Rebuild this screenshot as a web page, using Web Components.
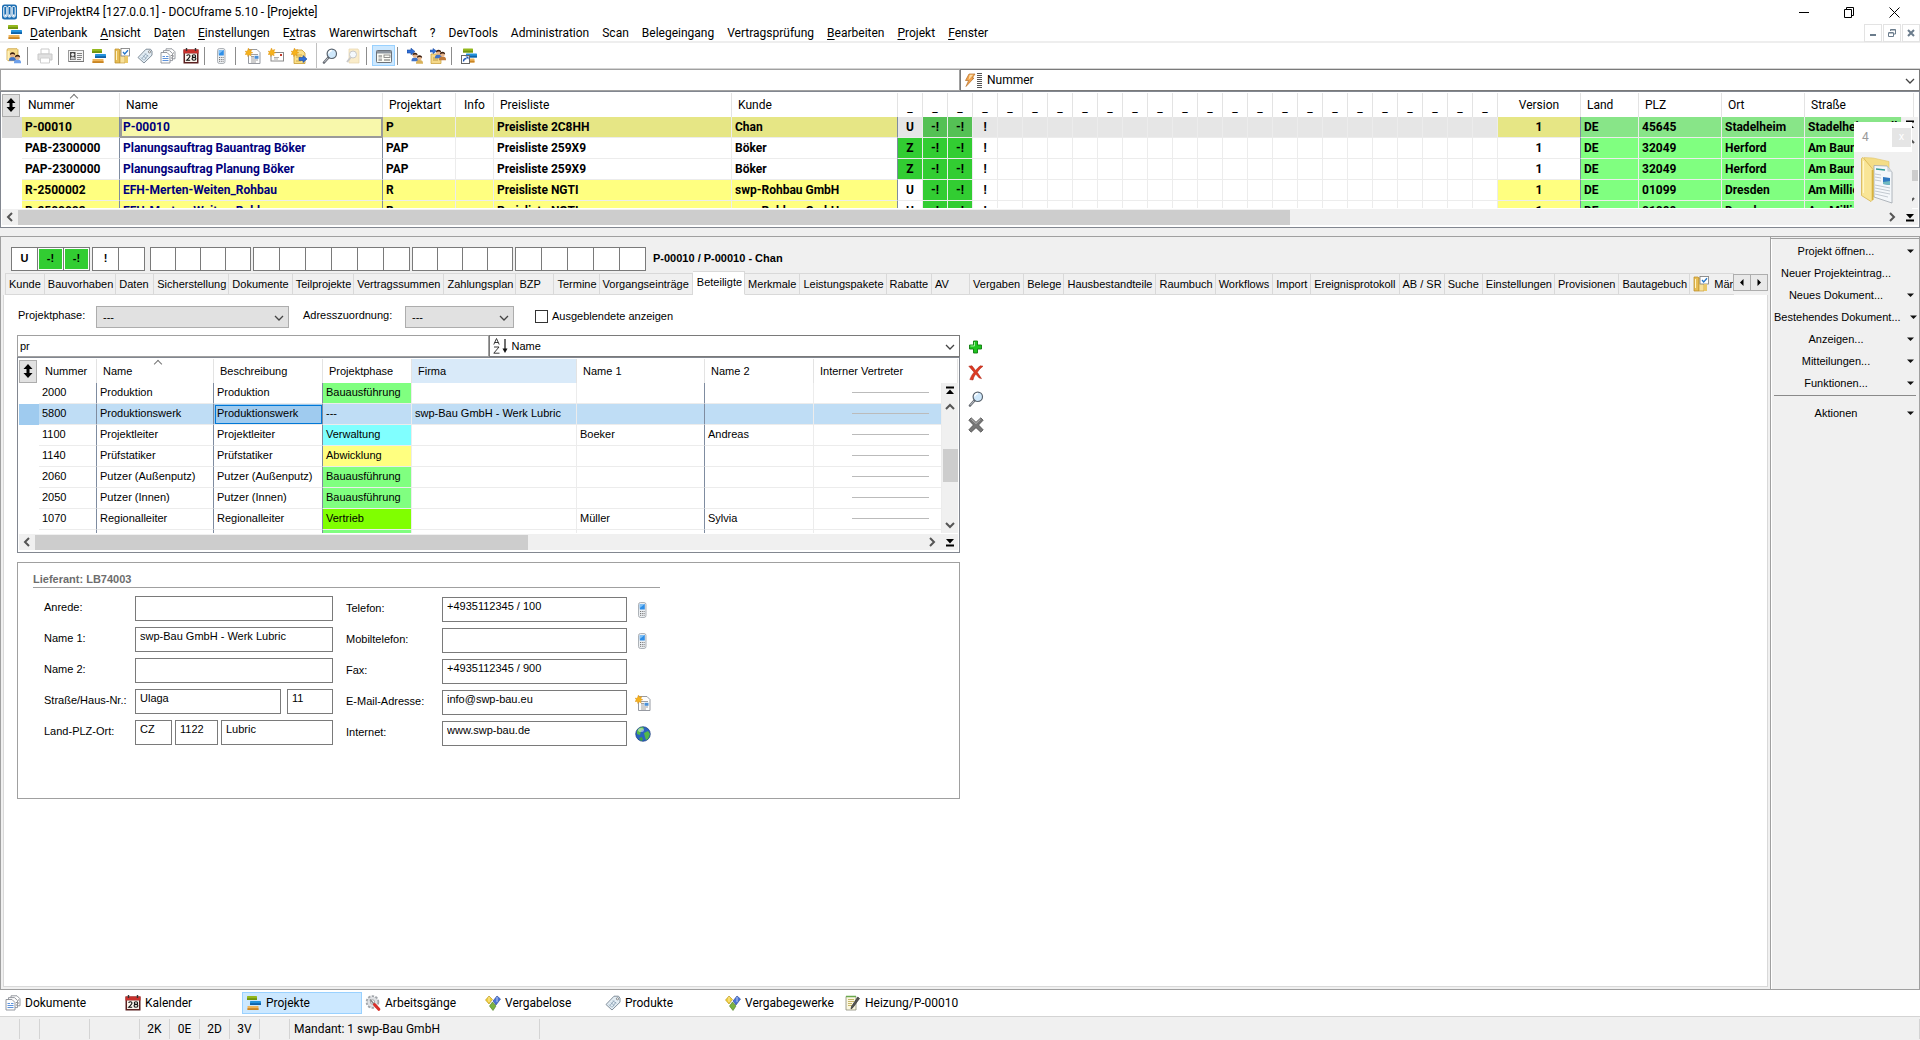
<!DOCTYPE html>
<html lang="de">
<head>
<meta charset="utf-8">
<title>DFViProjektR4 - DOCUframe</title>
<style>
html,body{margin:0;height:100%}
body{overflow:hidden;--ui:Roboto,"Open Sans","Noto Sans",sans-serif;--ms:"Liberation Sans",Arial,sans-serif;font:12px/16px var(--ui);color:#000;background:#fff}
df-app{height:100%}
</style>
</head>
<body>
<df-app></df-app>
<script>
const BASE='<style>*{box-sizing:border-box}:host{display:block;box-sizing:border-box}button{font:inherit;color:inherit;border:0;background:none;padding:0;margin:0}input,select{font:inherit;color:inherit;margin:0;outline:0;border-radius:0}a{color:inherit;text-decoration:none}u{text-underline-offset:2px}</style>';
class Base extends HTMLElement{
  connectedCallback(){ if(this.shadowRoot) return; this.attachShadow({mode:'open'}).innerHTML=BASE+this.view(); }
}
const def=(n,c)=>customElements.define(n,c);

const sheet=(x,y,w,h)=>`<path d="M${x} ${y}h${w-3}l3 3v${h-3}h-${w}z" fill="#fdfdfd" stroke="#8b8f96" stroke-width=".9"/>`;
const star='<path d="M3.5 0l.9 2.3 2.4-.8-1 2.200 2 1-2.200.8.6 2.300-2.300-1-1 1.800-.6-2.200L0 6.500l1.300-1.700L0 3.200l2.200.1z" fill="#f6b21c" stroke="#d98a0a" stroke-width=".4"/>';
const bars='<rect x="1" y="1" width="10" height="4" rx=".6" fill="#94b81e"/><rect x="1" y="3.200" width="10" height="1.800" fill="#6f9410"/><rect x="4" y="6" width="11" height="4" rx=".6" fill="#2492dd"/><rect x="4" y="8.200" width="11" height="1.800" fill="#0f62a8"/><rect x="1.500" y="11" width="11" height="4" rx=".6" fill="#efb45a"/><rect x="1.500" y="13.200" width="11" height="1.800" fill="#c98524"/>';
const man=(x,y,c)=>`<g transform="translate(${x} ${y})"><path d="M0 8q0-3 3.500-3t3.500 3v.8h-7z" fill="${c}"/><circle cx="3.500" cy="3" r="2.300" fill="#e8b48a"/><path d="M1 3Q.8.3 3.500.3T6.100 3Q5 1.900 3.500 2T1 3z" fill="#3a1e10"/></g>`;
const rightArrow=(x,y)=>`<path d="M${x} ${y+1.500}h4v-2l4 3.500-4 3.500v-2h-4z" fill="#2f6fd8" stroke="#1a489c" stroke-width=".6"/>`;
const ICONS={
app:'<rect x="0" y=".5" width="15" height="15" rx="2.500" fill="#1d6fb4"/><rect x="1.800" y="2.500" width="3" height="10.500" rx="1" fill="none" stroke="#fff"/><rect x="6" y="2.500" width="3" height="10.500" rx="1" fill="none" stroke="#fff"/><rect x="10.200" y="2.500" width="3" height="10.500" rx="1" fill="none" stroke="#fff"/><path d="M2.500 10.500h1.600v2H2.500zM6.700 10.500h1.600v2H6.700zM11 10.500h1.600v2H11z" fill="#fff"/>',
gantt:bars,
personfolder:'<path d="M1 1.500l1-.8h9l1 1v11H2l-1-1z" fill="#f5d98a" stroke="#c79b32" stroke-width=".7"/><path d="M1.500 3h2v9h-2z" fill="#fff0b8"/>'+man(3,4,'#3f72c8')+man(8,6.500,'#6ea0ea'),
printer:'<g opacity=".45"><path d="M4 1h8v5H4z" fill="#fff" stroke="#8a8a8a"/><path d="M1 6h14v6H1z" fill="#bbb" stroke="#888"/><path d="M3.500 10h9v5h-9z" fill="#fff" stroke="#999"/></g>',
card:'<rect x=".5" y="2.500" width="15" height="11" fill="#f4f4f4" stroke="#9a9a9a"/><path d="M1 13.500h15v-11" fill="none" stroke="#777"/><rect x="2" y="4" width="5.500" height="8" fill="#454545"/><circle cx="4.700" cy="6.500" r="1.600" fill="#eee"/><path d="M2.500 11.500q0-3 2.200-3t2.300 3z" fill="#ccc"/><path d="M9 5.500h5M9 7.500h5M9 9.500h5M9 11.500h4" stroke="#777" stroke-width=".9"/>',
cabinet:'<path d="M1 1h4l1 1v13H1z" fill="#e7bd55" stroke="#b98b22" stroke-width=".7"/><path d="M6 2h5v13H6z" fill="#f7e09a" stroke="#c69b36" stroke-width=".7"/><path d="M2.500 3v9" stroke="#fff3c4"/><rect x="7" y=".5" width="8.500" height="7.500" fill="#fff" stroke="#777" stroke-width=".8"/><path d="M9 4l1.700 2L14 2.300" fill="none" stroke="#2375c9" stroke-width="1.300"/><path d="M11 8h3v7h-3z" fill="#eac868"/>',
tag:'<path d="M9 1.200h4.500l1.500 2v4L7 15l-6-5.500z" fill="#e3edf4" stroke="#74828e" stroke-width=".9"/><circle cx="12.500" cy="3.800" r="1.100" fill="#fff" stroke="#666" stroke-width=".7"/><path d="M4 9.500l3 3M6 7.500l3 3M8 5.500l3 3M5 10.500l4-5M7.500 12l3.500-5" stroke="#7890a6" stroke-width=".7"/>',
docs:sheet(6,.8,9,10)+sheet(3.500,2.600,9,10)+sheet(1,4.500,9,10.500)+'<path d="M2.500 8.500h2.500M6 8.500h2.500M2.500 10.500h6M2.500 12.500h6" stroke="#4a86d8" stroke-width=".9"/><path d="M11 7.500h1M13 5h1M11 10h1M13 8h1" stroke="#888"/>',
cal:'<rect x=".5" y="1.500" width="15" height="14" fill="#5b2020"/><rect x=".5" y="1.500" width="15" height="4" fill="#c9302c"/><rect x="2" y="5.500" width="12" height="8.500" fill="#fbf6ef"/><path d="M3.500 0v3M12.500 0v3" stroke="#333" stroke-width="1.400"/><path d="M3.800 8q0-1.200 1.600-1.200T7 8q0 1-3.200 4.200H7.200M11 6.800q1.600 0 1.600 1.300T11 9.400q-1.700 0-1.700-1.300T11 6.800zM11 9.400q1.900 0 1.900 1.400T11 12.200q-2 0-2-1.400T11 9.400z" fill="none" stroke="#111" stroke-width="1.100"/>',
phone:'<rect x="3.500" y=".5" width="7.500" height="15" rx="2" fill="#eceff2" stroke="#9aa0a6" stroke-width=".8"/><rect x="4.800" y="2" width="5" height="5.500" fill="#2f8ee6"/><path d="M4.800 2h5L4.800 6z" fill="#7fc0f6"/><path d="M5 9.500h4.600M5 11.500h4.600M5 13.300h4.600" stroke="#777" stroke-dasharray="1 .8"/>',
newdoc:sheet(3.500,1.500,11.500,14)+'<path d="M6 6.500h7M6 12h7M6 14h5" stroke="#888" stroke-width=".8"/><path d="M6 8.500h3M6 10h3" stroke="#888" stroke-width=".8"/><rect x="9.500" y="7.800" width="4" height="3" fill="#4a90d8"/>'+star,
newmail:'<rect x="3" y="4.500" width="12.500" height="8.500" fill="#fff" stroke="#8a8a8a"/><path d="M6 9.500h5M6 11h4" stroke="#999" stroke-width=".8"/><rect x="12" y="6" width="2" height="2" fill="#c0392b"/>'+star,
newarrow:'<path d="M3 2h8l3 3v10.500H3z" fill="#fae08a" stroke="#c79b32" stroke-width=".8"/><path d="M5 7h6M5 9h5M5 13h5" stroke="#c7a040" stroke-width=".8"/>'+star+rightArrow(8,8),
lens:'<path d="M6.500 9.500L2 14.500" stroke="#6a6f76" stroke-width="2.600" stroke-linecap="round"/><path d="M6 10L2.400 14" stroke="#c8ccd2" stroke-width=".9"/><circle cx="9.800" cy="5.800" r="4.700" fill="#cfe8fb" stroke="#59636e" stroke-width="1.200"/><path d="M6.700 5.500q.4-2.800 3.200-3" fill="none" stroke="#fff" stroke-width="1.400"/>',
searchfolder:'<g opacity=".4"><path d="M4 1h9l1 2v12H4z" fill="#f3d27a" stroke="#c79b32" stroke-width=".7"/><path d="M6 9L2 14" stroke="#777" stroke-width="2"/><circle cx="8" cy="6.500" r="3.500" fill="#e6f2fb" stroke="#777"/></g>',
form:'<rect x=".5" y="2.500" width="15" height="12" rx=".8" fill="#fbfbf4" stroke="#6b7178"/><rect x="1" y="3" width="14" height="2.500" fill="#8d959e"/><path d="M2.500 8h3.500M2.500 12h3.500M8 12h6" stroke="#666"/><rect x="8" y="7" width="6" height="2.500" fill="none" stroke="#777" stroke-width=".8"/><path d="M2.500 10h3.500" stroke="#aaa"/>',
assign1:'<path d="M0 2h4V.2L8 3.500 4 6.700V5H0z" fill="#2f6fd8" stroke="#1a489c" stroke-width=".6"/>'+man(4.500,4.500,'#3f72c8')+man(9,7,'#d9b25a'),
assign2:'<path d="M1 6h9l1 1v8.500H1z" fill="#f5d98a" stroke="#c79b32" stroke-width=".7"/><path d="M3 10h5M3 12h5" stroke="#b08a30" stroke-width=".8"/><path d="M0 2h3V.4L6.500 3 3 5.700V4H0z" fill="#2f6fd8" stroke="#1a489c" stroke-width=".5"/>'+man(5,1.500,'#3f72c8')+man(9,3.500,'#c07a3a'),
ganttlink:'<g transform="translate(1 -.5)">'+bars+'</g><rect x=".5" y="7.500" width="8" height="8" fill="#fff" stroke="#666"/><path d="M2.500 13.500q0-3 3-3" stroke="#1c57b5" stroke-width="1.300" fill="none"/><path d="M4.500 8.500h3v3z" fill="#1c57b5"/>',
bolt:'<path d="M5 2h6L8.200 6H10L2 14.500l2.600-6H1.500z" fill="#f0a04a" stroke="#b3702c" stroke-width=".7"/><path d="M5.700 2.800h3.500L4.500 8z" fill="#ffe0a8"/>',
lines:'<path d="M0 1.500h5M0 3.500h5M0 5.500h5M0 7.500h5M0 9.500h5M0 11.500h5M0 13.500h5M0 15.500h5" stroke="#555"/>',
az:'<path d="M.8 6.500L3.500.5 6.200 6.500M1.700 4.500h3.600M1 9h5L.8 15.200h5.700" fill="none" stroke="#222" stroke-width=".9"/><path d="M12 1v11" stroke="#111" stroke-width="1.200"/><path d="M9.500 10.500h5L12 15z" fill="#111"/>',
plus:'<path d="M5.500 2h4v4h4v4h-4v4h-4v-4h-4V6h4z" fill="#1fc51f" stroke="#0d7a0d" stroke-width=".9"/><path d="M6.500 3v4h-4" stroke="#9df09d" fill="none"/>',
redx:'<path d="M.8 1.200L4 .8l3.600 4.700Q10 2.200 12.300.8l2.700.4Q11.500 3.800 9.300 7.300l4.200 6.300-2.300-.6-3.500-4q-2.300 3.200-2.700 6l-3.200-.5Q3.500 10 6 7.200z" fill="#dd3a22" stroke="#a51f10" stroke-width=".5"/>',
greyx:'<path d="M3.200.8L8 5.300 12.800.8l2.400 2.400L10.600 8l4.600 4.800-2.400 2.400L8 10.700l-4.800 4.500L.8 12.800 5.400 8 .8 3.200z" fill="#777" stroke="#444" stroke-width=".7"/><path d="M3.200 2L8 6.500 12.500 2.200" stroke="#bbb" fill="none"/>',
globe:'<circle cx="8" cy="8" r="7.300" fill="#2a63c0" stroke="#1b3d7d" stroke-width=".7"/><path d="M2 5q2-4 6-4l1 2-3 2-1 4-3-1zM9 7l4-2 2 3-2 5-2 1-1-3z" fill="#54b948"/><path d="M4 12l3-1 1 3-2 1z" fill="#3fa23a"/><ellipse cx="6" cy="4" rx="3" ry="2" fill="#fff" opacity=".45"/>',
gears:'<circle cx="7.500" cy="7" r="5.500" fill="#c9ccd0" stroke="#a2a6ab" stroke-width="2.600" stroke-dasharray="2.300 1.200"/><circle cx="7.500" cy="7" r="5" fill="#dfe1e4"/><circle cx="7.500" cy="7" r="2.200" fill="#fff" stroke="#888" stroke-width=".7"/><path d="M5 4.500l4 4.500" stroke="#888" stroke-width="1.600"/><path d="M9.500 9.500l4.300 4.800" stroke="#d8302a" stroke-width="3" stroke-linecap="round"/>',
diamonds:'<path d="M4 1l3.500 3.500L4 9 .5 5z" fill="#f2cf3a" stroke="#b08f16" stroke-width=".6"/><path d="M12 1l3.500 3L11 10 8 6z" fill="#4a74d8" stroke="#23418f" stroke-width=".6"/><path d="M7.500 7L11 11l-3 4.500L4.500 11z" fill="#7cb342" stroke="#4a7a1c" stroke-width=".6"/><path d="M4 2v5M12 2v5" stroke="#fff" opacity=".6"/>',
note:'<path d="M1 1.500h10v13.500H1z" fill="#fbf7df" stroke="#8a8a7a" stroke-width=".8"/><path d="M3 4.500h6M3 6.500h6M3 8.500h4M3 10.500h4" stroke="#bfae5a" stroke-width=".9"/><path d="M14.500 3.500L8 12.500l-2 1.500.5-2.500L12.800 2z" fill="#555" stroke="#222" stroke-width=".6"/><path d="M1 1.500h10" stroke="#6aa84f" stroke-width="1.500"/>',
updown:'<path d="M8 1l4.500 5H9.500v4h3L8 15l-4.500-5h3V6h-3z" fill="#000"/>',
chev:'<path d="M4 6l4 4 4-4" fill="none" stroke="#444" stroke-width="1.300"/>',
left:'<path d="M10 4L6 8l4 4" fill="none" stroke="#555" stroke-width="2"/>',
right:'<path d="M6 4l4 4-4 4" fill="none" stroke="#555" stroke-width="2"/>',
up:'<path d="M4 10l4-4 4 4" fill="none" stroke="#555" stroke-width="2"/>',
down:'<path d="M4 6l4 4 4-4" fill="none" stroke="#555" stroke-width="2"/>',
totop:'<path d="M4 4.500h8" stroke="#000" stroke-width="2"/><path d="M8 6.500l4 4.500H4z" fill="#000"/>',
tobottom:'<path d="M4 11.500h8" stroke="#000" stroke-width="2"/><path d="M8 9.500l4-4.500H4z" fill="#000"/>',
caret:'<path d="M5 6.500h7L8.500 10z" fill="#111"/>',
folderbig:'<path d="M3 .5l9 .5 16 3.500v30l-16 5z" fill="#f4dd86" stroke="#e0c468" stroke-width=".6"/><path d="M13 8.500l13 .5 5 6v31l-18-6z" fill="#f4f7fa" stroke="#9fa6ad" stroke-width=".8"/><path d="M26 9l.5 5.500 4.500.5z" fill="#cfd6dc"/><path d="M15 12l9 1" stroke="#2f9a94" stroke-width="1.400"/><path d="M14 17l6 1M14 20l6 1M14 23l6 1M14 28l15 3M14 31l15 3M14 34l15 3M14 37l13 3" stroke="#bdc4cc" stroke-width=".9"/><path d="M22 20l7 1v7l-7-1z" fill="#2f78c0"/><path d="M22 25l7-1v4l-7-1z" fill="#6fb9c0"/><path d="M.5 1.500L2 .5l10 12v30l-2 2-9.500-6z" fill="#f9e596" stroke="#d9b95a" stroke-width=".9"/><path d="M11.500 13v30" stroke="#d8b23f" stroke-width="1.600"/><path d="M2.500 4v32" stroke="#fff6c8" stroke-width="1.200"/>'
};
def('df-icon',class extends Base{
  view(){const n=this.getAttribute('name'),w=+this.getAttribute('w')||16,h=+this.getAttribute('h')||16;
    return `<style>:host{display:inline-block;flex:none;width:${w}px;height:${h}px;line-height:0}</style><svg width="${w}" height="${h}" viewBox="0 0 ${w} ${h}" aria-hidden="true">${ICONS[n]}</svg>`;}
});
const ic=(n,a='')=>`<df-icon name="${n}" ${a}></df-icon>`;

def('df-titlebar',class extends Base{view(){return `<style>:host{display:flex;height:24px;align-items:center;padding:0 3px 0 2px}
 span{flex:1;padding-left:5px}button{width:45px;height:20px;display:flex;align-items:center;justify-content:center}svg{fill:none;stroke:#000}</style>
 ${ic('app')}<span>DFViProjektR4 [127.0.0.1] - DOCUframe 5.10 - [Projekte]</span>
 <button aria-label="Minimieren"><svg width="11" height="11"><path d="M0 5.500h10"/></svg></button>
 <button aria-label="Wiederherstellen"><svg width="11" height="11"><path d="M.5 2.500h7v8h-7zM2.500 2.500v-2h7v8h-2"/></svg></button>
 <button aria-label="Schließen"><svg width="11" height="11"><path d="M.5.5l10 10M10.500.5l-10 10"/></svg></button>`}});

def('df-menubar',class extends Base{view(){
 const m=['<u>D</u>atenbank','<u>A</u>nsicht','Da<u>t</u>en','<u>E</u>instellungen','E<u>x</u>tras','Warenwirtschaft','?','DevTools','Administration','Scan','Belegeingang','Vertragsprüfung','<u>B</u>earbeiten','<u>P</u>rojekt','<u>F</u>enster'];
 return `<style>:host{display:flex;height:19px;align-items:flex-start;border-bottom:2px solid #eee;padding-left:7px}
 nav{display:flex;flex:1;gap:13px;padding-left:7px}nav button{height:17px;line-height:19px}
 .w{display:flex;gap:1px}.w button{width:18px;height:18px;border:1px solid #e3e3e3;display:flex;align-items:center;justify-content:center;background:#fff}svg{fill:none;stroke:#6b7c8c;stroke-width:2}</style>
 ${ic('gantt')}<nav>${m.map(t=>`<button>${t}</button>`).join('')}</nav>
 <div class="w"><button aria-label="Fenster minimieren"><svg width="8" height="8"><path d="M1 6h6"/></svg></button>
 <button aria-label="Fenster wiederherstellen"><svg width="8" height="8" stroke-width="1"><path stroke-width="1" d="M.5 4h5v3.500h-5zM.5 3.500h5M2.500 2V.5h5V5H6M2.500 1h5"/></svg></button>
 <button aria-label="Fenster schließen"><svg width="8" height="8"><path d="M1 1l6 6M7 1L1 7"/></svg></button></div>`}});

def('df-toolbar',class extends Base{view(){
 const t='personfolder|printer|card gantt cabinet tag docs cal|phone|newdoc newmail newarrow/lens searchfolder|*form|assign1 assign2|ganttlink';
 const h=t.replace(/[|]/g,' | ').replace('/',' / ').split(/\s+/).map(n=>n=='|'?'<i></i>':n=='/'?'<i class="band"></i>':`<button aria-label="${n.replace('*','')}" ${n[0]=='*'?'class="on" aria-pressed="true"':''}>${ic(n.replace('*',''))}</button>`).join('');
 return `<style>:host{display:flex;height:26px;padding-left:2px;align-items:center;border-bottom:1px solid #d4d4d4}
 button{width:23px;height:21px;display:flex;align-items:center;justify-content:center}.on{background:#cce8ff;border:1px solid #99d1ff}
 i{width:8px;height:18px;flex:none;background:linear-gradient(#8c8c8c,#8c8c8c) 2px 0/1px 100% no-repeat}.band{height:25px;background:linear-gradient(#c0c0c0,#c0c0c0) 6px 0/1px 100% no-repeat}</style>${h}`}});

def('df-combo',class extends Base{view(){
 return `<style>:host{display:flex;position:relative;align-items:center;border:1px solid #7a7a7a;background:#fff;padding-left:3px}
 :host([grey]){background:#e1e1e1;border-color:#adadad}
 select{appearance:none;border:0;background:none;flex:1;min-width:0;height:20px;padding:0 20px 0 3px}
 .a{position:absolute;right:1px;top:50%;margin-top:-7px;pointer-events:none}</style>
 <slot></slot><select aria-label="${this.getAttribute('label')}"><option>${this.getAttribute('value')}</option></select><df-icon class="a" name="chev"></df-icon>`}});

def('df-searchrow',class extends Base{view(){const v=this.getAttribute('value')||'';
 return `<style>:host{display:flex;height:22px}input{flex:1 1 50%;min-width:0;border:1px solid #a0a0a0;padding:0 2px;height:22px}df-combo{flex:0 0 50%}</style>
 <input type="text" aria-label="Suche" value="${v}"><df-combo label="Sortierung" value="${this.getAttribute('sort')}"><slot></slot></df-combo>`}});

class Grid extends Base{
 view(){const c=this.cfg(),cols=c.cols;
 const cell=(v,i)=>{let k=cols[i],o=typeof v=='object'?v:{t:v},s=[];
   if(o.bg)s.push('background:'+o.bg);
   return `<td class="${k.c?'c ':''}${k.dark?'dark ':''}${k.name?'nm ':''}${o.cur?'cur':''}" ${s.length?`style="${s}"`:''}>${o.t}</td>`};
 return `<style>:host{display:flex;flex-direction:column;border:1px solid #828790;padding:1px;background:#fff;overflow:hidden}
 .body{flex:1;display:flex;min-height:0}.clip{flex:1;min-width:0;overflow:hidden}
 .head{padding-right:${c.headpad}px}
 table{border-collapse:separate;border-spacing:0;table-layout:fixed;width:100%}
 th{height:24px;padding:0 0 0 6px;font-weight:400;text-align:left;border-right:1px solid #e3e3e3;white-space:nowrap;overflow:hidden;position:relative;vertical-align:middle}
 th.c{text-align:center;padding:0}th.low{padding-top:6px}th:first-child,td:first-child{border-right:0;padding:0}th.hot{background:#d9eaf9}
 th.s::after{content:"";position:absolute;left:50%;top:2px;width:5px;height:5px;border:solid #777;border-width:1px 0 0 1px;transform:rotate(45deg)}
 td{height:21px;padding:0 0 ${c.lift}px 3px;line-height:18px;white-space:nowrap;overflow:hidden;border-right:1px solid #ececec;border-bottom:1px solid #ececec;vertical-align:middle;font-weight:${c.bold?700:400}}
 td:first-child{border-bottom:0}td.c{text-align:center;padding:0}td.dark{border-right-color:#7f8ca0}td.nm{color:#00007c}
 td.cur{outline:${c.curline};outline-offset:-2px}
 .sel{display:flex;width:${c.sel-2}px;height:23px;border:1px solid #adadad;background:#e1e1e1;align-items:center;justify-content:center}
 hr{border:0;border-top:1px solid #bbb;margin:0 12px 0 auto;width:77px}
 .v{width:16px;background:#f0f0f0;display:flex;flex-direction:column;align-items:center;justify-content:space-between}
 .v i{flex:1;width:100%;display:flex;flex-direction:column}.v i::before{content:"";flex:${c.v[0]}}.v i::after{content:"";flex:${c.v[2]}}.v b{flex:${c.v[1]};background:#cdcdcd;width:15px;align-self:flex-end}
 .h{height:16px;background:#f0f0f0;display:flex;align-items:center;margin:1px 0}.h b{background:#cdcdcd;height:15px;flex:${c.h[0]}}.h i{flex:${c.h[1]}}.h .e{margin-left:2px}</style>
 <div class="head"><table><colgroup>${cols.map(k=>`<col ${k.w?`style="width:${k.w}px"`:''}>`).join('')}</colgroup><thead><tr>${cols.map((k,i)=>`<th class="${k.h?.[0]=='_'?'low ':''}${k.c?'c ':''}${k.hot?'hot ':''}${k.s?'s':''}">${i?k.h:`<button class="sel" aria-label="Zeilen">${ic('updown')}</button>`}</th>`).join('')}</tr></thead></table></div>
 <div class="body"><div class="clip"><table><colgroup>${cols.map(k=>`<col ${k.w?`style="width:${k.w}px"`:''}>`).join('')}</colgroup><tbody>${c.rows.map(r=>`<tr>${r.map(cell).join('')}</tr>`).join('')}</tbody></table></div>
 <div class="v">${ic('totop')}${ic('up')}<i><b></b></i>${ic('down')}</div></div>
 <div class="h">${ic('left')}<b></b><i></i>${ic('right')}${ic('tobottom','class="e"')}</div>`}
}
def('df-projects',class extends Grid{cfg(){
 const cols=[{w:20},{h:'Nummer',w:98,dark:1,s:1},{h:'Name',w:263,name:1,dark:1},{h:'Projektart',w:73},{h:'Info',w:38,c:1},{h:'Preisliste',w:238},{h:'Kunde',w:166,dark:1},...Array.from({length:24},()=>({h:'_',w:25,c:1})),{h:'Version',w:83,c:1,dark:1},{h:'Land',w:58},{h:'PLZ',w:83},{h:'Ort',w:83},{h:'Straße'}];
 const row=(n,nm,a,p,k,z,l,o,s,y,sel)=>{const Y=sel?'#e6e685':y?'#ffff80':'#fff',G=sel?'#88e588':'#80ff80',K=sel?'#55c155':'#32cd32',E=sel?'#e6e6e6':'#fff';
  const f=t=>({t,bg:Y}),g=t=>({t,bg:G}),e=t=>({t,bg:E});
  return [sel?{t:'',bg:'#dcdcdc'}:'',f(n),sel?{t:nm,bg:'#f8f8ab',cur:1}:f(nm),f(a),f(''),f(p),f(k),z=='Z'?{t:z,bg:K}:e(z),{t:'-!',bg:K},{t:'-!',bg:K},e('!'),...Array(20).fill(e('')),f('1'),g('DE'),g(l),g(o),g(s)]};
 return {cols,bold:1,sel:20,headpad:4,lift:0,curline:'2px solid #9a9a9a',v:[34,17,18],h:[1272,594],rows:[
 row('P-00010','P-00010','P','Preisliste 2C8HH','Chan','U','45645','Stadelheim','Stadelheimer Allee',1,1),
 row('PAB-2300000','Planungsauftrag Bauantrag Böker','PAP','Preisliste 259X9','Böker','Z','32049','Herford','Am Baum'),
 row('PAP-2300000','Planungsauftrag Planung Böker','PAP','Preisliste 259X9','Böker','Z','32049','Herford','Am Baum'),
 row('R-2500002','EFH-Merten-Weiten_Rohbau','R','Preisliste NGTI','swp-Rohbau GmbH','U','01099','Dresden','Am Millionen',1),
 row('R-2500003','EFH-Merten-Weiten_Rohbau','R','Preisliste NGTI','swp-Rohbau GmbH','U','01099','Dresden','Am Millionen',1)]};}});
def('df-participants',class extends Grid{cfg(){
 const cols=[{w:20},{h:'Nummer',w:58,dark:1},{h:'Name',w:117,s:1,dark:1},{h:'Beschreibung',w:109,dark:1},{h:'Projektphase',w:89},{h:'Firma',w:165,hot:1},{h:'Name 1',w:128,dark:1},{h:'Name 2',w:109},{h:'Interner Vertreter'}];
 const B=['Bauausführung','#80ff80'];
 const r=(n,a,p,f='',x='',y='',sel)=>{const S=t=>sel?{t,bg:'#bfddf5'}:t;return [sel?{t:'',bg:'#9fcbef'}:'',S(n),S(a),sel?{t:a,bg:'#9fcbef',cur:1}:a,{t:p[0],bg:p[1]},S(f),S(x),S(y),S('<hr>')]};
 return {cols,sel:20,headpad:0,lift:2,curline:'1px solid #0078d7',v:[35,33,36],h:[493,396],rows:[
 r('2000','Produktion',B),r('5800','Produktionswerk',['---','#bfddf5'],'swp-Bau GmbH - Werk Lubric','','',1),
 r('1100','Projektleiter',['Verwaltung','#80ffff'],'','Boeker','Andreas'),r('1140','Prüfstatiker',['Abwicklung','#ffff80']),
 r('2060','Putzer (Außenputz)',B),r('2050','Putzer (Innen)',B),r('1070','Regionalleiter',['Vertrieb','#80ff00'],'','Müller','Sylvia'),r('','',['',B[1]])]};}});

def('df-flags',class extends Base{view(){
 const g=[[['U'],['-!',1],['-!',1]],[['!'],['']],Array(4).fill(['']),Array(6).fill(['']),Array(4).fill(['']),Array(5).fill([''])];
 return `<style>:host{display:flex;align-items:center;font:bold 11px/14px var(--ms)}.g{display:flex;margin-right:2px}.g:nth-of-type(2){margin-right:5px}
 .g span{width:27px;height:24px;border:1px solid #7a7a7a;background:#fff;padding:1px;margin-left:-1px}.g.n4 span{width:26px}.g span:first-child{margin-left:0}.g em{display:block;font-style:normal;text-align:center;line-height:18px;height:20px}.on{background:#32cd32}strong{margin-left:5px;padding-bottom:2px}</style>
 ${g.map(a=>`<div class="g n${a.length}">${a.map(c=>`<span><em class="${c[1]?'on':''}">${c[0]}</em></span>`).join('')}</div>`).join('')}<strong>P-00010 / P-00010 - Chan</strong>`}});

def('df-tabs',class extends Base{view(){
 const t='Kunde,Bauvorhaben,Daten,Sicherstellung,Dokumente,Teilprojekte,Vertragssummen,Zahlungsplan,BZP,Termine,Vorgangseinträge,*Beteiligte,Merkmale,Leistungspakete,Rabatte,AV,Vergaben,Belege,Hausbestandteile,Raumbuch,Workflows,Import,Ereignisprotokoll,AB / SR,Suche,Einstellungen,Provisionen,Bautagebuch'.split(',');
 return `<style>:host{display:flex;height:24px;align-items:flex-end;padding-left:2px}.t{display:flex;flex:1;min-width:0;overflow:hidden;align-items:flex-end;height:24px}
 .t button{flex:none;height:22px;border:solid #d9d9d9;border-width:1px 1px 1px 0;padding:0 3px;white-space:nowrap;min-width:38px;text-align:left;line-height:20px;display:flex;align-items:center;gap:5px}
 .t button:nth-child(even){padding-right:2px}
 .t button:first-child{border-left-width:1px}.t .on{height:24px;background:#fff;border-bottom-color:#fff;padding:0 5px 3px 4px}
 .n{display:flex;align-self:flex-start;padding-top:3px}.n button{width:18px;height:17px;border:1px solid #adadad;background:#e9e9e9;display:flex;align-items:center;justify-content:center;margin-left:-1px}</style>
 <div class="t" role="tablist">${t.map(x=>x[0]=='*'?`<button role="tab" class="on" aria-selected="true">${x.slice(1)}</button>`:`<button role="tab">${x}</button>`).join('')}<button role="tab">${ic('cabinet')}Mängel</button></div>
 <div class="n"><button aria-label="Zurück"><svg width="6" height="7"><path d="M4.500 0v7L1 3.500z"/></svg></button><button aria-label="Weiter"><svg width="6" height="7"><path d="M1.500 0v7L5 3.500z"/></svg></button></div>`}});

def('df-filter',class extends Base{view(){return `<style>:host{display:flex;height:23px;padding-left:1px;align-items:flex-start}label{line-height:18px}df-combo{height:22px}
 .a{width:193px;margin:0 14px 0 15px}.b{width:109px;margin:0 21px 0 14px}.k{display:flex;gap:4px;align-items:center;height:20px}
 .k input{appearance:none;width:13px;height:13px;border:1px solid #333;background:#fff}
 .l{width:63px}.m{width:88px}</style>
 <label class="l">Projektphase:</label><df-combo class="a" grey label="Projektphase" value="---"></df-combo>
 <label class="m">Adresszuordnung:</label><df-combo class="b" grey label="Adresszuordnung" value="---"></df-combo>
 <label class="k"><input type="checkbox">Ausgeblendete anzeigen</label>`}});

def('df-supplier',class extends Base{view(){
 const f=(id,l,bs,i='',k='')=>`<div class="r"><label for="${id}">${l}</label><div class="f ${k}">${bs.map((b,n)=>`<input type="text" ${n?`aria-label="${l}"`:`id="${id}"`} value="${b[0]}" style="flex:${b[1]} 1 0">`).join('')}</div>${i?`<button aria-label="${l} öffnen">${ic(i)}</button>`:''}</div>`;
 return `<style>:host{border:1px solid #a0a0a0;height:237px;padding:9px 15px}
 h2{font:bold 11px/15px var(--ms);color:#6d6d6d;margin:0;border-bottom:1px solid #a0a0a0;max-width:627px}
 .c{display:flex;padding-top:8px}.l,.q{display:flex;flex-direction:column;gap:6px}.l{padding-left:11px;margin-right:13px}.q{padding-top:1px}
 .r{display:flex;height:25px;align-items:center}label{padding-bottom:4px}.l label{width:91px}.q label{width:96px}.f{display:flex;gap:3px;width:198px}.q .f{width:185px}.f.w{gap:6px}
 .q button{margin-left:8px;height:16px}
 input{min-width:0;width:0;height:25px;border:1px solid #7a7a7a;padding:0 4px 7px;background:#fff}</style>
 <h2>Lieferant: LB74003</h2><div class="c"><div class="l">${f('an','Anrede:',[['',1]])}${f('n1','Name 1:',[['swp-Bau GmbH - Werk Lubric',1]])}${f('n2','Name 2:',[['',1]])}${f('st','Straße/Haus-Nr.:',[['Ulaga',136],['11',36]],'','w')}${f('lo','Land-PLZ-Ort:',[['CZ',27],['1122',33],['Lubric',102]])}</div>
 <div class="q">${f('te','Telefon:',[['+4935112345 / 100',1]],'phone')}${f('mo','Mobiltelefon:',[['',1]],'phone')}${f('fa','Fax:',[['+4935112345 / 900',1]])}${f('em','E-Mail-Adresse:',[['info@swp-bau.eu',1]],'newdoc')}${f('in','Internet:',[['www.swp-bau.de',1]],'globe')}</div></div>`}});

def('df-actions',class extends Base{view(){
 const a=['Projekt öffnen...','-Neuer Projekteintrag...','Neues Dokument...','Bestehendes Dokument...','Anzeigen...','Mitteilungen...','Funktionen...'];
 const b=t=>{const n=t[0]=='-';return `<button><span>${n?t.slice(1):t}</span>${n?'<s></s>':ic('caret')}</button>`};
 return `<style>:host{width:149px;border-left:1px solid #a0a0a0;box-shadow:inset 0 1px #f0f0f0,inset 0 2px #a0a0a0,inset 1px 0 #fff;padding:3px 1px 0 3px;background:#f0f0f0}
 button{display:flex;width:100%;height:22px;align-items:center}span{flex:1;text-align:center;white-space:nowrap}s{width:16px;flex:none}s,df-icon{margin-left:4px}
 hr{border:0;border-top:1px solid #8a8a8a;margin:1px 2px 6px 0}</style>${a.map(b).join('')}<hr>${b('Aktionen')}`}});

def('df-windows',class extends Base{view(){
 const w=[['docs','Dokumente'],['cal','Kalender'],['gantt','Projekte',1],['gears','Arbeitsgänge'],['diamonds','Vergabelose'],['tag','Produkte'],['diamonds','Vergabegewerke'],['note','Heizung/P-00010']];
 return `<style>:host{display:flex;height:26px;padding:2px 0 0 2px;background:#fff}button{width:120px;height:22px;display:flex;align-items:center;gap:4px;padding-left:3px;white-space:nowrap}.on{background:#cce8ff;border:1px solid #99d1ff}</style>
 ${w.map(x=>`<button class="${x[2]?'on':''}">${ic(x[0])}${x[1]}</button>`).join('')}`}});
def('df-status',class extends Base{view(){
 return `<style>:host{display:flex;height:24px;background:#f0f0f0;border-top:1px solid #d4d4d4;padding-top:2px}span{border-right:1px solid #d4d4d4;height:20px;line-height:20px;text-align:center;flex:none}.l{text-align:left;padding-left:4px}.z{flex:1}</style>
 ${[20,20,50,50].map(w=>`<span style="width:${w}px"></span>`).join('')}${['2K','0E','2D','3V',''].map(t=>`<span style="width:30px">${t}</span>`).join('')}<span class="l" style="width:250px">Mandant: 1 swp-Bau GmbH</span><span class="z"></span>`}});

def('df-drop',class extends Base{view(){return `<style>:host{width:58px;height:87px;background:#f0f0f0}.b{display:flex;background:#fff;height:30px;align-items:center;justify-content:space-between;padding-left:8px;color:#999}button{width:19px;height:19px;background:#e5e5e5;color:#fff;font-size:11px;line-height:16px;margin-right:1px}df-icon{margin:5px 0 0 7px}</style>
 <div class="b"><span>4</span><button aria-label="Schließen">x</button></div>${ic('folderbig','w="36" h="48"')}`}});

def('df-app',class extends Base{view(){return `<style>:host{display:flex;flex-direction:column;position:relative}
 df-projects{height:137px;flex:none}df-drop{position:absolute;right:8px;top:31px}.top{position:relative;flex:none;background:#fff}
 .wrap{background:#f0f0f0;flex:1;min-height:0;padding-top:8px;display:flex}
 .pane{flex:1;min-width:0;display:flex;border:1px solid #a0a0a0;background:#f0f0f0;font:11px/14px var(--ms)}
 .left{flex:1;min-width:0;display:flex;flex-direction:column;padding:10px 2px 0 2px}df-flags{padding-left:8px;height:24px}
 .page{flex:1;min-height:0;background:#fff;border:1px solid #d9d9d9;border-top:0;padding:11px 0 0 13px;margin-bottom:2px}
 .cols{display:flex;gap:8px}.w{width:943px;margin-top:6px}df-participants{height:196px}df-supplier{margin-top:9px}
 .side{display:flex;flex-direction:column;gap:10px;padding-top:10px}.side button{height:16px}
 button{border:0;background:none;padding:0}</style>
 <df-titlebar></df-titlebar><df-menubar></df-menubar><df-toolbar></df-toolbar>
 <df-searchrow sort="Nummer">${ic('bolt','w="13"')}${ic('lines','w="7"')}</df-searchrow>
 <div class="top"><df-projects></df-projects><df-drop></df-drop></div>
 <div class="wrap"><div class="pane"><div class="left"><df-flags></df-flags><df-tabs></df-tabs>
 <div class="page"><df-filter></df-filter><div class="cols"><div class="w"><df-searchrow value="pr" sort="Name">${ic('az')}</df-searchrow><df-participants></df-participants><df-supplier></df-supplier></div>
 <div class="side"><button aria-label="Hinzufügen">${ic('plus')}</button><button aria-label="Entfernen">${ic('redx')}</button><button aria-label="Anzeigen">${ic('lens')}</button><button aria-label="Löschen">${ic('greyx')}</button></div></div></div></div>
 <df-actions></df-actions></div></div>
 <df-windows></df-windows><df-status></df-status>`}});
</script>
</body>
</html>
